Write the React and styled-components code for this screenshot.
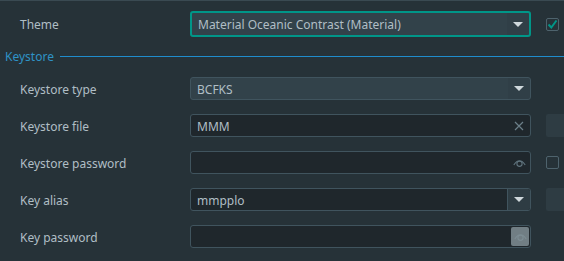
import React from 'react'
import styled, { createGlobalStyle } from 'styled-components'

const Global = createGlobalStyle`
  html, body { margin: 0; padding: 0; background: #263238; }
`

const Page = styled.div`
  width: 564px;
  height: 261px;
  overflow: hidden;
  background: #263238;
  border-top: 1px solid #3a4a52;
  box-sizing: border-box;
  font-family: "Noto Sans", "DejaVu Sans", sans-serif;
  font-size: 12px;
  color: #b0bec5;
`

const Grid = styled.div`
  display: grid;
  grid-template-columns: 190px 341px 15px 18px;
  align-items: center;
`

const Label = styled.div`
  padding-left: 20px;
  white-space: nowrap;
  padding-top: 1px;
`

const Row = styled(Grid)`
  height: 23px;
  margin-top: ${p => p.gap}px;
`

const ThemeRow = styled(Grid)`
  height: 26px;
  margin-top: 10px;
`

const Section = styled.div`
  display: flex;
  align-items: center;
  gap: 6px;
  margin-top: 6px;
  padding-left: 5px;
  height: 26px;
  color: #2e93c6;
  &::after {
    content: '';
    flex: 1;
    height: 1px;
    background: #1f8ccc;
  }
`

const Field = styled.div`
  display: flex;
  align-items: center;
  box-sizing: border-box;
  height: ${p => (p.focus ? 26 : 23)}px;
  border: ${p => (p.focus ? '2px solid #009688' : '1px solid #40545e')};
  border-radius: 3px;
  background: ${p => (p.combo ? '#32424a' : '#1f272c')};
  padding-left: 6px;
  color: #b0bec5;
  overflow: hidden;
`

const Value = styled.span`
  flex: 1;
  white-space: nowrap;
  padding-top: 1px;
`

const ArrowBox = styled.div`
  flex-shrink: 0;
  width: 22px;
  align-self: stretch;
  display: flex;
  align-items: center;
  justify-content: center;
  background: ${p => (p.split ? '#2e3c43' : 'rgba(0,0,0,0.04)')};
  border-left: ${p => (p.split ? '1px solid #40545e' : 'none')};
`

const Arrow = styled.div`
  width: 0;
  height: 0;
  border-left: 5px solid transparent;
  border-right: 5px solid transparent;
  border-top: 5px solid #cfd8dc;
`

const IconSlot = styled.div`
  flex-shrink: 0;
  width: 22px;
  display: flex;
  align-items: center;
  justify-content: center;
`

const EyeButton = styled.div`
  flex-shrink: 0;
  width: 18px;
  height: 19px;
  margin-right: 1px;
  border-radius: 2px;
  background: #717e84;
  display: flex;
  align-items: center;
  justify-content: center;
`

const Check = styled.div`
  width: 13px;
  height: 13px;
  box-sizing: border-box;
  border: 1px solid #4e636d;
  border-radius: 2px;
  background: #263238;
  display: flex;
  align-items: center;
  justify-content: center;
`

const SideButton = styled.div`
  grid-column: 4;
  height: 23px;
  background: #2e3c43;
  border-radius: 2px 0 0 2px;
`

const Eye = ({ color }) => (
  <svg width="13" height="11" viewBox="0 0 13 11">
    <path d="M0.8 8 Q6.5 -0.5 12.2 8" fill="none" stroke={color} strokeWidth="1.1" />
    <circle cx="6.5" cy="6.8" r="2.6" fill="none" stroke={color} strokeWidth="1.1" />
  </svg>
)

export default function App() {
  return (
    <Page>
      <Global />
      <ThemeRow>
        <Label>Theme</Label>
        <Field focus combo>
          <Value>Material Oceanic Contrast (Material)</Value>
          <ArrowBox><Arrow /></ArrowBox>
        </Field>
        <span />
        <Check style={{ marginTop: 1 }}>
          <svg width="11" height="11" viewBox="0 0 11 11">
            <path d="M1.5 5.5 L4.3 8.5 L9.5 1.5" fill="none" stroke="#009688" strokeWidth="2" />
          </svg>
        </Check>
      </ThemeRow>

      <Section>Keystore</Section>

      <Row gap={8}>
        <Label>Keystore type</Label>
        <Field combo>
          <Value>BCFKS</Value>
          <ArrowBox><Arrow /></ArrowBox>
        </Field>
      </Row>

      <Row gap={14}>
        <Label>Keystore file</Label>
        <Field>
          <Value>MMM</Value>
          <IconSlot>
            <svg width="10" height="10" viewBox="0 0 10 10">
              <path d="M1 1 L9 9 M9 1 L1 9" stroke="#6b7f89" strokeWidth="1.2" />
            </svg>
          </IconSlot>
        </Field>
        <span />
        <SideButton />
      </Row>

      <Row gap={14}>
        <Label>Keystore password</Label>
        <Field>
          <Value />
          <IconSlot><Eye color="#5f737d" /></IconSlot>
        </Field>
        <span />
        <Check />
      </Row>

      <Row gap={14}>
        <Label>Key alias</Label>
        <Field>
          <Value>mmpplo</Value>
          <ArrowBox split><Arrow /></ArrowBox>
        </Field>
        <span />
        <SideButton />
      </Row>

      <Row gap={14}>
        <Label>Key password</Label>
        <Field>
          <Value />
          <EyeButton><Eye color="#7d8d94" /></EyeButton>
        </Field>
      </Row>
    </Page>
  )
}
